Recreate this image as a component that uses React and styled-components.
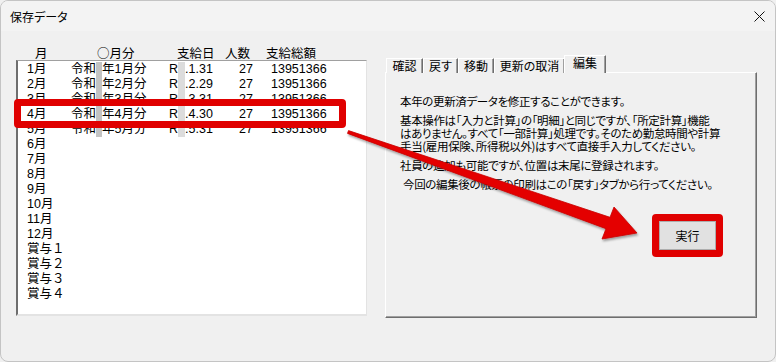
import React from "react";
import styled, { createGlobalStyle } from "styled-components";

const Global = createGlobalStyle`
  html, body { margin: 0; padding: 0; background: #f0f0f0; }
  body { font-family: "Liberation Sans", "Noto Sans CJK JP", sans-serif; color: #000; }
  #root { width: 776px; height: 362px; overflow: hidden; }
`;

const Window = styled.div`
  position: relative;
  width: 776px;
  height: 362px;
  box-sizing: border-box;
  background: #f0f0f0;
  border: 1px solid #c4c4c4;
  border-radius: 8px;
  overflow: hidden;
  display: flex;
  flex-direction: column;
`;

const TitleBar = styled.div`
  height: 30px;
  flex: none;
  display: flex;
  align-items: center;
  justify-content: space-between;
  padding: 0 6px 0 9px;
  background: #f3f3f3;
  font-family: "Noto Sans CJK JP", sans-serif;
  font-feature-settings: "palt";
  font-size: 12px;
`;

const CloseBox = styled.div`
  width: 20px;
  height: 20px;
  display: flex;
  align-items: center;
  justify-content: center;
`;

const Body = styled.div`
  flex: 1;
  display: flex;
  align-items: flex-start;
  padding: 14px 0 0 15px;
  gap: 18px;
`;

const LeftPane = styled.div`
  width: 351px;
  display: flex;
  flex-direction: column;
`;

const HeaderRow = styled.div`
  display: grid;
  grid-template-columns: 62px 80px 48px 41px auto;
  padding-left: 19px;
  height: 15px;
  line-height: 15px;
  font-size: 12.5px;
  font-family: "Noto Sans CJK JP", sans-serif;
  white-space: nowrap;
`;

const ListBox = styled.div`
  height: 256px;
  box-sizing: border-box;
  background: #fff;
  border-top: 1px solid #a0a0a0;
  border-left: 2px solid #6e6e6e;
  border-right: 1px solid #e3e3e3;
  border-bottom: 2px solid #e3e3e3;
  padding: 1px 0 0 9px;
`;

const Row = styled.div`
  display: grid;
  grid-template-columns: 44px 98px 70px 32px auto;
  height: 15px;
  line-height: 15px;
  font-size: 12.5px;
  white-space: nowrap;
`;

const Cell = styled.div`
  display: flex;
  align-items: stretch;
  overflow: visible;
`;

const Redact = styled.span`
  display: inline-block;
  width: ${(p) => p.w}px;
  height: 15px;
  background: ${(p) => p.shade};
`;

const RightPane = styled.div`
  width: 372px;
  margin-top: 11px;
  display: flex;
  flex-direction: column;
`;

const TabStrip = styled.div`
  display: flex;
  align-items: flex-end;
  height: 17px;
  padding-left: 1px;
  position: relative;
  z-index: 1;
  margin-bottom: -1px;
`;

const Tab = styled.div`
  box-sizing: border-box;
  width: ${(p) => p.w}px;
  height: ${(p) => (p.active ? 18 : 15)}px;
  border-top: 1px solid #fff;
  border-left: 1px solid #fff;
  border-right: 1px solid #6e6e6e;
  box-shadow: inset -1px 0 0 #a0a0a0;
  background: #f0f0f0;
  font-family: "Noto Sans CJK JP", sans-serif;
  font-feature-settings: "palt";
  font-size: 12px;
  line-height: 14px;
  text-align: center;
  white-space: nowrap;
  margin-left: ${(p) => (p.active ? -1 : 0)}px;
`;

const Panel = styled.div`
  box-sizing: border-box;
  height: 246px;
  border-top: 1px solid #fff;
  border-left: 1px solid #fff;
  border-right: 1px solid #6e6e6e;
  border-bottom: 1px solid #6e6e6e;
  box-shadow: inset -1px -1px 0 #a0a0a0;
  padding: 22px 0 0 14px;
  font-family: "Noto Sans CJK JP", sans-serif;
  font-feature-settings: "palt";
  font-size: 11.5px;
  line-height: 13px;
  display: flex;
  flex-direction: column;
`;

const Para = styled.p`
  margin: 0 0 6px 0;
  padding-left: ${(p) => p.indent || 0}px;
  white-space: nowrap;
  letter-spacing: -0.35px;
`;

const ButtonRow = styled.div`
  display: flex;
  justify-content: flex-end;
  padding-right: 33px;
  margin-top: 17px;
`;

const RedFrame = styled.div`
  border: 7px solid #e00000;
  border-radius: 4px;
  display: flex;
`;

const Button = styled.button`
  width: 57px;
  height: 29px;
  box-sizing: border-box;
  border: 1px solid #adadad;
  background: #e1e1e1;
  font-family: "Noto Sans CJK JP", sans-serif;
  font-size: 12px;
  padding: 0;
  color: #000;
`;

const RowHighlight = styled.div`
  position: absolute;
  left: ${(p) => p.x}px;
  top: ${(p) => p.y}px;
  width: ${(p) => p.w}px;
  height: ${(p) => p.h}px;
  box-sizing: border-box;
  border: 7px solid #e00000;
  border-radius: 4px;
  pointer-events: none;
`;

const ArrowLayer = styled.svg`
  position: absolute;
  left: 0;
  top: 0;
  pointer-events: none;
`;

const rows = [
  { m: "1月", era: "1", d: ".1.31" },
  { m: "2月", era: "2", d: ".2.29" },
  { m: "3月", era: "3", d: ".3.31" },
  { m: "4月", era: "4", d: ".4.30" },
  { m: "5月", era: "5", d: ".5.31" },
];
const empties = ["6月", "7月", "8月", "9月", "10月", "11月", "12月", "賞与１", "賞与２", "賞与３", "賞与４"];

export default function App() {
  return (
    <>
      <Global />
      <Window>
        <TitleBar>
          <span>保存データ</span>
          <CloseBox>
            <svg width="11" height="11" viewBox="0 0 11 11">
              <path d="M0.5 0.5 L10.5 10.5 M10.5 0.5 L0.5 10.5" stroke="#111" strokeWidth="1" />
            </svg>
          </CloseBox>
        </TitleBar>
        <Body>
          <LeftPane>
            <HeaderRow>
              <span>月</span>
              <span>○月分</span>
              <span>支給日</span>
              <span>人数</span>
              <span>支給総額</span>
            </HeaderRow>
            <ListBox>
              {rows.map((r) => (
                <Row key={r.m}>
                  <Cell>{r.m}</Cell>
                  <Cell>
                    令和<Redact w={6} shade="#c3c3c3" />年{r.era}月分
                  </Cell>
                  <Cell>
                    R<Redact w={7} shade="#dcdcdc" />{r.d}
                  </Cell>
                  <Cell>27</Cell>
                  <Cell>13951366</Cell>
                </Row>
              ))}
              {empties.map((m) => (
                <Row key={m}>
                  <Cell>{m}</Cell>
                </Row>
              ))}
            </ListBox>
          </LeftPane>
          <RightPane>
            <TabStrip>
              <Tab w={37}>確認</Tab>
              <Tab w={35}>戻す</Tab>
              <Tab w={36}>移動</Tab>
              <Tab w={71}>更新の取消</Tab>
              <Tab w={42} active>編集</Tab>
            </TabStrip>
            <Panel>
              <Para>本年の更新済データを修正することができます。</Para>
              <Para>
                基本操作は「入力と計算」の「明細」と同じですが、「所定計算」機能
                <br />
                はありません。すべて「一部計算」処理です。そのため勤怠時間や計算
                <br />
                手当(雇用保険、所得税以外)はすべて直接手入力してください。
              </Para>
              <Para>社員の追加も可能ですが、位置は末尾に登録されます。</Para>
              <Para indent={3}>今回の編集後の帳票の印刷はこの「戻す」タブから行ってください。</Para>
              <ButtonRow>
                <RedFrame>
                  <Button>実行</Button>
                </RedFrame>
              </ButtonRow>
            </Panel>
          </RightPane>
        </Body>
        <RowHighlight x={13} y={98} w={332} h={29} />
        <ArrowLayer width="776" height="362" viewBox="0 0 776 362">
          <defs>
            <filter id="sh" x="-10%" y="-10%" width="120%" height="130%">
              <feDropShadow dx="1" dy="2" stdDeviation="1.2" floodColor="#000" floodOpacity="0.35" />
            </filter>
          </defs>
          <g filter="url(#sh)">
            <polygon
              points="347.5,129.6 609,216.3 613,206 636,232 601,238 605,227.7 346.5,132.4"
              fill="#e40000"
              stroke="#c80000"
              strokeWidth="0.8"
              strokeLinejoin="round"
            />
          </g>
        </ArrowLayer>
      </Window>
    </>
  );
}
